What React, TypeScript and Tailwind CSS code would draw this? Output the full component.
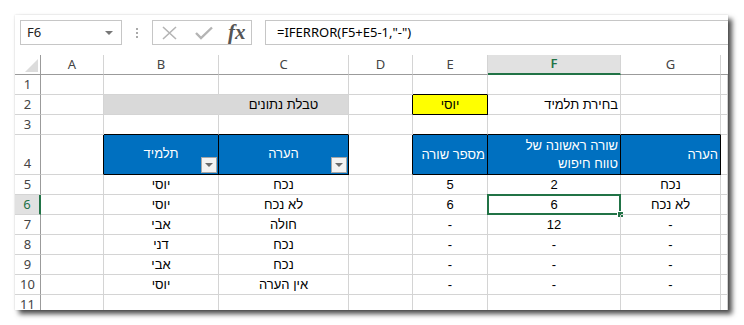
import React from "react";

const cols = ["A", "B", "C", "D", "E", "F", "G"];

const hdrFont = "font-['Segoe_UI','Noto_Sans',sans-serif]";
const cellFont = "font-['Liberation_Sans',Arial,sans-serif]";

function Cell({ className = "", children }: { className?: string; children?: React.ReactNode }) {
  return (
    <div className={`relative flex items-center border-r border-b border-[#d4d4d4] text-[13px] text-black ${cellFont} ${className}`}>
      {children}
    </div>
  );
}

function RowHead({ n, active = false }: { n: number; active?: boolean }) {
  return (
    <div
      className={`flex items-center justify-center border-b border-[#d4d4d4] text-[13px] ${hdrFont} ${
        active
          ? "bg-[#e1e1e1] text-[#217346] border-r-2 border-r-[#217346]"
          : "text-[#444] border-r border-r-[#9b9b9b]"
      }`}
    >
      {n}
    </div>
  );
}

function He({ children }: { children: React.ReactNode }) {
  return <span dir="rtl">{children}</span>;
}

function FilterBtn() {
  return (
    <div className="absolute right-[1px] bottom-[1px] w-[16px] h-[16px] bg-[#f3f3f3] border border-[#a6a6a6] flex items-center justify-center">
      <div className="w-0 h-0 border-l-[4px] border-r-[4px] border-t-[4px] border-l-transparent border-r-transparent border-t-[#6b6b6b]" />
    </div>
  );
}

const data = [
  { n: 5, b: "יוסי", c: "נכח", e: "5", f: "2", g: "נכח" },
  { n: 6, b: "יוסי", c: "לא נכח", e: "6", f: "6", g: "לא נכח" },
  { n: 7, b: "אבי", c: "חולה", e: "-", f: "12", g: "-" },
  { n: 8, b: "דני", c: "נכח", e: "-", f: "-", g: "-" },
  { n: 9, b: "אבי", c: "נכח", e: "-", f: "-", g: "-" },
  { n: 10, b: "יוסי", c: "אין הערה", e: "-", f: "-", g: "-" },
];

export default function App() {
  return (
    <div className="w-[744px] h-[325px] bg-white pt-[15px] pl-[15px]">
      <div className="w-[713px] h-[295px] bg-white overflow-hidden shadow-[0_0_2px_rgba(0,0,0,0.15),4px_4px_5px_rgba(0,0,0,0.7)]">
        {/* formula bar */}
        <div className="h-[40px] pt-[5px] flex items-start">
          <div className={`ml-[5px] w-[102px] h-[25px] border border-[#c6c6c6] flex items-center justify-between pl-[6px] pr-[8px] text-[13px] text-[#222] ${hdrFont}`}>
            <span>F6</span>
            <div className="w-0 h-0 border-l-[4px] border-r-[4px] border-t-[4px] border-l-transparent border-r-transparent border-t-[#777]" />
          </div>
          <div className="w-[30px] h-[25px] flex flex-col items-center justify-center gap-[2px]">
            <div className="w-[2px] h-[2px] bg-[#aaa]" />
            <div className="w-[2px] h-[2px] bg-[#aaa]" />
            <div className="w-[2px] h-[2px] bg-[#aaa]" />
          </div>
          <div className="w-[100px] h-[25px] border border-[#c6c6c6] flex items-center pl-[8px] gap-[17px]">
            <svg width="17" height="14" viewBox="0 0 17 14">
              <path d="M2 1 L15 13 M15 1 L2 13" stroke="#b4b4b4" strokeWidth="1.6" fill="none" />
            </svg>
            <svg width="18" height="14" viewBox="0 0 18 14">
              <path d="M1 7 L6 12 L17 1.5" stroke="#b4b4b4" strokeWidth="2.4" fill="none" />
            </svg>
            <span className="font-['Liberation_Serif',serif] italic font-bold text-[21px] leading-none text-[#555] -ml-[2px]">fx</span>
          </div>
          <div className={`ml-[13px] flex-1 h-[25px] border border-[#c6c6c6] border-r-0 flex items-center pl-[11px] text-[13px] text-black ${hdrFont}`}>
            =IFERROR(F5+E5-1,"-")
          </div>
        </div>

        {/* sheet */}
        <div className="grid grid-cols-[26px_63px_115px_130px_64px_75px_133px_100px_7px] grid-rows-[20px_20px_20px_20px_40px_20px_20px_20px_20px_20px_20px_20px]">
          {/* column headers */}
          <div className="border-r border-r-[#9b9b9b] border-b border-b-[#9b9b9b] flex items-end justify-end pr-[2px] pb-[2px]">
            <svg width="13" height="13" viewBox="0 0 13 13">
              <path d="M13 0 L13 13 L0 13 Z" fill="#dcdcdc" />
            </svg>
          </div>
          {cols.map((c) =>
            c === "F" ? (
              <div
                key={c}
                className={`flex items-center justify-center bg-[#e1e1e1] border-r border-r-[#d4d4d4] border-b-2 border-b-[#217346] text-[13px] font-semibold text-[#217346] ${hdrFont}`}
              >
                {c}
              </div>
            ) : (
              <div
                key={c}
                className={`flex items-center justify-center border-r border-r-[#d4d4d4] border-b border-b-[#9b9b9b] text-[13px] text-[#444] ${hdrFont}`}
              >
                {c}
              </div>
            )
          )}
          <div className="border-b border-b-[#9b9b9b]" />

          {/* row 1 */}
          <RowHead n={1} />
          <Cell />
          <Cell />
          <Cell />
          <Cell />
          <Cell className="border-b-black" />
          <Cell />
          <Cell />
          <Cell />

          {/* row 2 */}
          <RowHead n={2} />
          <Cell />
          <Cell className="bg-[#d9d9d9] border-r-[#d9d9d9]" />
          <Cell className="bg-[#d9d9d9] justify-center">
            <He>טבלת נתונים</He>
          </Cell>
          <Cell className="border-r-black" />
          <Cell className="bg-[#ffff00] border-r-black border-b-black justify-center">
            <He>יוסי</He>
          </Cell>
          <Cell className="justify-end pr-[2px]">
            <He>בחירת תלמיד</He>
          </Cell>
          <Cell />
          <Cell />

          {/* row 3 */}
          <RowHead n={3} />
          <Cell />
          <Cell className="border-b-black" />
          <Cell className="border-b-black" />
          <Cell />
          <Cell className="border-b-black" />
          <Cell className="border-b-black" />
          <Cell className="border-b-black" />
          <Cell />

          {/* row 4 */}
          <div className={`flex items-end justify-center pb-[1px] border-b border-[#d4d4d4] border-r border-r-[#9b9b9b] text-[13px] text-[#444] ${hdrFont}`}>4</div>
          <Cell className="border-r-black" />
          <Cell className="bg-[#0070c0] border-r-black border-b-black justify-center text-white pb-[2px]">
            <He>תלמיד</He>
            <FilterBtn />
          </Cell>
          <Cell className="bg-[#0070c0] border-r-black border-b-black justify-center text-white pb-[2px]">
            <He>הערה</He>
            <FilterBtn />
          </Cell>
          <Cell className="border-r-black" />
          <Cell className="bg-[#0070c0] border-r-black border-b-black justify-end pr-[2px] text-white">
            <He>מספר שורה</He>
          </Cell>
          <Cell className="bg-[#0070c0] border-r-black border-b-black justify-end pr-[2px] text-white">
            <div dir="rtl" className="leading-[18px] text-right">
              שורה ראשונה של
              <br />
              טווח חיפוש
            </div>
          </Cell>
          <Cell className="bg-[#0070c0] border-r-black border-b-black justify-end pr-[2px] text-white">
            <He>הערה</He>
          </Cell>
          <Cell />

          {/* data rows */}
          {data.map((r) => (
            <React.Fragment key={r.n}>
              <RowHead n={r.n} active={r.n === 6} />
              <Cell />
              <Cell className="justify-center">
                <He>{r.b}</He>
              </Cell>
              <Cell className="justify-center">
                <He>{r.c}</He>
              </Cell>
              <Cell />
              <Cell className="justify-center">{r.e}</Cell>
              <Cell className="justify-center">
                {r.f}
                {r.n === 6 && (
                  <>
                    <div className="absolute -left-[1px] -top-[1px] right-[-1px] bottom-[-1px] border-2 border-[#217346]" />
                    <div className="absolute -right-[4px] -bottom-[4px] w-[7px] h-[7px] bg-[#217346] border border-white" />
                  </>
                )}
              </Cell>
              <Cell className="justify-center">
                <He>{r.g}</He>
              </Cell>
              <Cell />
            </React.Fragment>
          ))}

          {/* row 11 */}
          <RowHead n={11} />
          <Cell />
          <Cell />
          <Cell />
          <Cell />
          <Cell />
          <Cell />
          <Cell />
          <Cell />
        </div>
      </div>
    </div>
  );
}
